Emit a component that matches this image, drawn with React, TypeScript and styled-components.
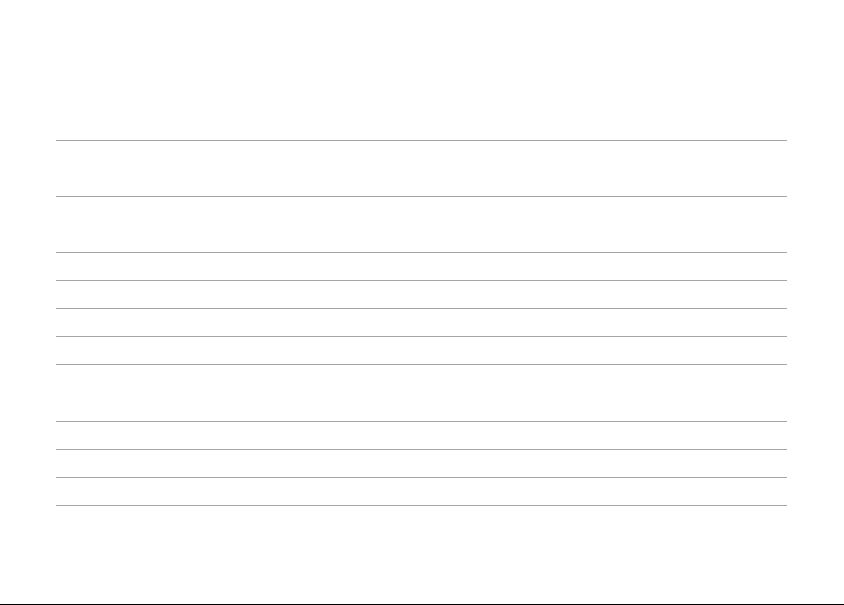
import React from "react";
import styled, { createGlobalStyle } from "styled-components";

const Global = createGlobalStyle`
  html, body { margin: 0; padding: 0; background: #fff; }
  body { font-family: "Liberation Sans", Arial, sans-serif; }
`;

const Page = styled.div`
  box-sizing: border-box;
  height: 100vh;
  display: flex;
  flex-direction: column;
  border-bottom: 1px solid #000;
  padding: 140px 57px 0 56px;
`;

const Table = styled.div`
  display: flex;
  flex-direction: column;
  border-bottom: 1px solid #a6a6a6;
`;

const Row = styled.div<{ $h: number }>`
  box-sizing: border-box;
  height: ${(p) => p.$h}px;
  border-top: 1px solid #a6a6a6;
`;

const rows = [56, 56, 28, 28, 28, 28, 57, 28, 28, 28];

export default function App() {
  return (
    <>
      <Global />
      <Page>
        <Table>
          {rows.map((h, i) => (
            <Row key={i} $h={h} />
          ))}
        </Table>
      </Page>
    </>
  );
}
